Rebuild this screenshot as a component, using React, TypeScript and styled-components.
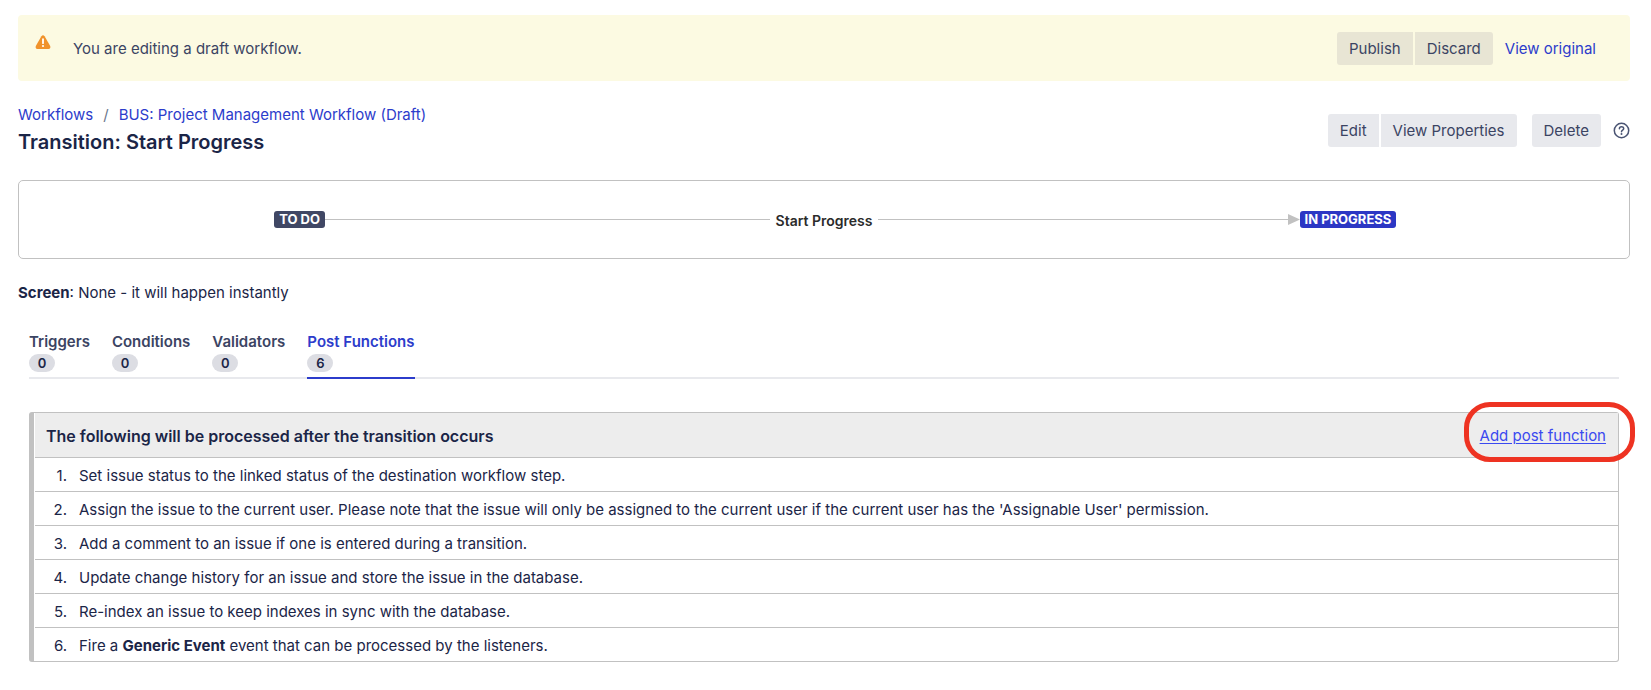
import React from "react";
import styled, { createGlobalStyle } from "styled-components";

const color = {
  ink: "#1b2547",
  subtle: "#3b4463",
  link: "#2c3ccb",
  border: "#c1c1c1",
  button: "#e8e9ed",
  bannerButton: "#e8e5d4",
  banner: "#fcfae2",
};

const GlobalStyle = createGlobalStyle`
  *, *::before, *::after { box-sizing: border-box; }
  body {
    margin: 0;
    background: #fff;
    color: ${color.ink};
    font: 15px/20px Inter, "Liberation Sans", sans-serif;
  }
`;

const Page = styled.div`
  padding: 15px 21px 24px 18px;
`;

const Banner = styled.section`
  display: flex;
  align-items: center;
  min-height: 66px;
  padding: 16px 34px 16px 17px;
  border-radius: 4px;
  background: ${color.banner};
  color: ${color.subtle};
`;

const WarningIcon = styled.svg`
  flex: none;
  align-self: flex-start;
  margin: 3px 22px 0 0;
`;

const BannerText = styled.p`
  flex: 1;
  margin: 0;
  padding-top: 2px;
`;

const ButtonGroup = styled.div`
  display: flex;
  gap: 2px;
`;

const Button = styled.button<{ $tone?: "banner" }>`
  height: 33px;
  padding: 1px 12px 0;
  border: 0;
  background: ${(p) => (p.$tone === "banner" ? color.bannerButton : color.button)};
  color: ${color.subtle};
  font: inherit;
  white-space: nowrap;
  cursor: pointer;

  &:first-child {
    border-top-left-radius: 3px;
    border-bottom-left-radius: 3px;
  }
  &:last-child {
    border-top-right-radius: 3px;
    border-bottom-right-radius: 3px;
  }
`;

const Link = styled.a`
  color: ${color.link};
  text-decoration: none;
  white-space: nowrap;
`;

const BannerLink = styled(Link)`
  padding-top: 2px;
  margin-left: 12px;
`;

const Header = styled.header`
  display: flex;
  align-items: center;
  justify-content: space-between;
  margin-top: 24px;
`;

const Breadcrumbs = styled.nav`
  display: flex;
  gap: 10px;
  color: #6b778c;
`;

const Title = styled.h1`
  margin: 3px 0 0;
  font-size: 20px;
  line-height: 28px;
  font-weight: 600;
`;

const Actions = styled.div`
  display: flex;
  align-items: center;
  gap: 15px;
`;

const HelpLink = styled.a`
  display: flex;
  margin-left: -3px;
  color: #4a5473;
`;

const Diagram = styled.section`
  display: grid;
  grid-template-columns: 1fr auto 1fr;
  align-items: center;
  min-height: 79px;
  margin-top: 24px;
  border: 1px solid ${color.border};
  border-radius: 5px;
`;

const Half = styled.div<{ $side: "from" | "to" }>`
  display: flex;
  align-items: center;
  padding-left: ${(p) => (p.$side === "from" ? "34%" : "0")};
  padding-right: ${(p) => (p.$side === "to" ? "31%" : "0")};
`;

const Line = styled.span`
  flex: 1;
  height: 1px;
  background: ${color.border};
`;

const Arrow = styled.svg`
  flex: none;
  fill: ${color.border};
`;

const Lozenge = styled.span<{ $active?: boolean }>`
  padding: 0 5px;
  border-radius: 3px;
  background: ${(p) => (p.$active ? "#2c37c4" : "#404764")};
  color: #fff;
  font-size: 13px;
  line-height: 17px;
  font-weight: 700;
  white-space: nowrap;
`;

const TransitionName = styled.strong`
  padding: 2px 6px 0;
  color: #2b2b2b;
  font-size: 14px;
  line-height: 17px;
  font-weight: 600;
`;

const ScreenInfo = styled.p`
  margin: 24px 0 0;
`;

const Content = styled.div`
  padding: 0 11px;
`;

const Tabs = styled.nav`
  display: flex;
  gap: 22px;
  margin-top: 29px;
  box-shadow: inset 0 -2px ${color.button};
`;

const Tab = styled.a<{ $active?: boolean }>`
  display: flex;
  flex-direction: column;
  align-items: flex-start;
  gap: 2px;
  padding-bottom: 5px;
  border-bottom: 2px solid ${(p) => (p.$active ? color.link : "transparent")};
  color: ${(p) => (p.$active ? color.link : color.subtle)};
  font-weight: 600;
  text-decoration: none;
`;

const Count = styled.span`
  min-width: 26px;
  border-radius: 9px;
  background: #dcdde3;
  color: ${color.ink};
  font-size: 13px;
  line-height: 18px;
  font-weight: 600;
  text-align: center;
`;

const Panel = styled.section`
  margin-top: 33px;
  padding-left: 1px;
  border: 1px solid ${color.border};
  border-left-width: 5px;
  border-radius: 3px;
`;

const PanelHeader = styled.div`
  display: flex;
  align-items: center;
  justify-content: space-between;
  height: 44px;
  padding: 2px 12px 0 11px;
  background: #ededed;
`;

const PanelTitle = styled.h2`
  margin: 0;
  font-size: 16px;
  line-height: 20px;
  font-weight: 600;
`;

const AddLink = styled.a`
  position: relative;
  color: #3a49f0;
  text-underline-offset: 2px;

  &::after {
    content: "";
    position: absolute;
    inset: -24px -29px -16px -16px;
    border: 5px solid #ee3322;
    border-radius: 26px;
    pointer-events: none;
  }
`;

const Steps = styled.ol`
  margin: 0;
  padding: 0;
  list-style: none;
`;

const Step = styled.li`
  display: grid;
  grid-template-columns: 32px 1fr;
  column-gap: 12px;
  padding: 8px 0 5px;
  border-top: 1px solid ${color.border};
`;

const StepNumber = styled.span`
  text-align: right;
`;

const Strong = styled.strong`
  font-weight: 700;
`;

const tabs = [
  { name: "Triggers", count: 0 },
  { name: "Conditions", count: 0 },
  { name: "Validators", count: 0 },
  { name: "Post Functions", count: 6, active: true },
];

const steps: React.ReactNode[] = [
  "Set issue status to the linked status of the destination workflow step.",
  "Assign the issue to the current user. Please note that the issue will only be assigned to the current user if the current user has the 'Assignable User' permission.",
  "Add a comment to an issue if one is entered during a transition.",
  "Update change history for an issue and store the issue in the database.",
  "Re-index an issue to keep indexes in sync with the database.",
  <>
    Fire a <Strong>Generic Event</Strong> event that can be processed by the listeners.
  </>,
];

export default function App() {
  return (
    <>
      <GlobalStyle />
      <Page>
        <Banner>
          <WarningIcon width="16" height="16" viewBox="0 0 16 16" aria-hidden="true">
            <path
              d="M6.4 2.3Q8 .1 9.6 2.3L15.2 12Q16 14.6 13.6 15H2.4Q0 14.6.8 12Z"
              fill="#f0922b"
            />
            <path d="M8 5.2V9.2" stroke="#fff" strokeWidth="1.8" strokeLinecap="round" />
            <circle cx="8" cy="12" r="1.1" fill="#fff" />
          </WarningIcon>
          <BannerText>You are editing a draft workflow.</BannerText>
          <ButtonGroup>
            <Button type="button" $tone="banner">Publish</Button>
            <Button type="button" $tone="banner">Discard</Button>
          </ButtonGroup>
          <BannerLink href="#original">View original</BannerLink>
        </Banner>

        <Header>
          <div>
            <Breadcrumbs aria-label="Breadcrumbs">
              <Link href="#workflows">Workflows</Link>
              <span>/</span>
              <Link href="#workflow">BUS: Project Management Workflow (Draft)</Link>
            </Breadcrumbs>
            <Title>Transition: Start Progress</Title>
          </div>
          <Actions>
            <ButtonGroup>
              <Button type="button">Edit</Button>
              <Button type="button">View Properties</Button>
            </ButtonGroup>
            <ButtonGroup>
              <Button type="button">Delete</Button>
            </ButtonGroup>
            <HelpLink href="#help" aria-label="Help">
              <svg width="17" height="17" viewBox="0 0 17 17" fill="none" stroke="currentColor">
                <circle cx="8.5" cy="8.5" r="7.2" strokeWidth="1.5" />
                <path
                  d="M6.4 6.7C6.4 3.9 10.7 4 10.7 6.6C10.7 8.2 8.5 8.1 8.5 9.8"
                  strokeWidth="1.5"
                  strokeLinecap="round"
                />
                <circle cx="8.5" cy="12.1" r="1" fill="currentColor" stroke="none" />
              </svg>
            </HelpLink>
          </Actions>
        </Header>

        <Diagram>
          <Half $side="from">
            <Lozenge>TO DO</Lozenge>
            <Line />
          </Half>
          <TransitionName>Start Progress</TransitionName>
          <Half $side="to">
            <Line />
            <Arrow width="12" height="11" viewBox="0 0 12 11" aria-hidden="true">
              <path d="M0 0L12 5.5L0 11Z" />
            </Arrow>
            <Lozenge $active>IN PROGRESS</Lozenge>
          </Half>
        </Diagram>

        <ScreenInfo>
          <Strong>Screen</Strong>: None - it will happen instantly
        </ScreenInfo>

        <Content>
          <Tabs aria-label="Transition settings">
            {tabs.map((tab) => (
              <Tab
                key={tab.name}
                href="#tab"
                $active={tab.active}
                aria-current={tab.active ? "page" : undefined}
              >
                {tab.name}
                <Count>{tab.count}</Count>
              </Tab>
            ))}
          </Tabs>

          <Panel>
            <PanelHeader>
              <PanelTitle>The following will be processed after the transition occurs</PanelTitle>
              <AddLink href="#add">Add post function</AddLink>
            </PanelHeader>
            <Steps>
              {steps.map((step, i) => (
                <Step key={i}>
                  <StepNumber>{i + 1}.</StepNumber>
                  <span>{step}</span>
                </Step>
              ))}
            </Steps>
          </Panel>
        </Content>
      </Page>
    </>
  );
}
